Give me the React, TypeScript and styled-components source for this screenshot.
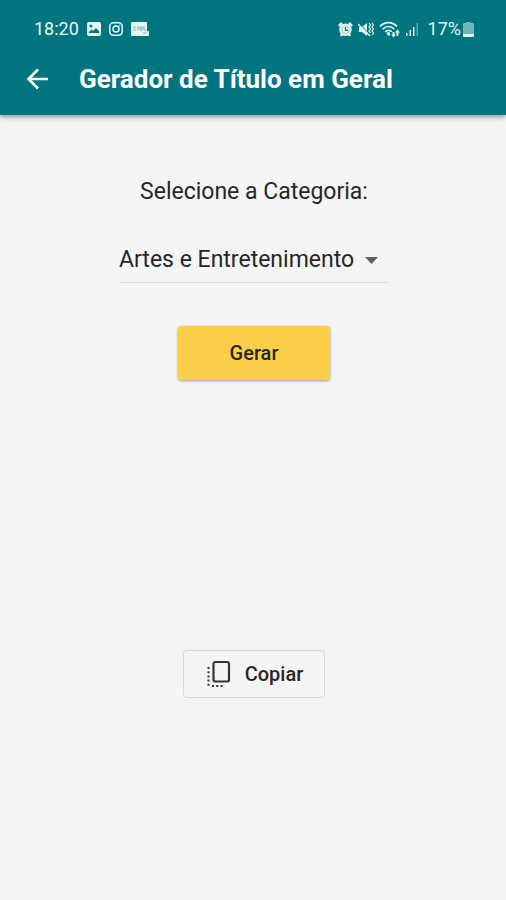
import React, { useState } from "react";
import styled, { createGlobalStyle } from "styled-components";

const GlobalStyle = createGlobalStyle`
  *, *::before, *::after { box-sizing: border-box; }
  body {
    margin: 0;
    background: #f5f5f5;
    color: #262626;
    font-family: Roboto, "Liberation Sans", sans-serif;
  }
`;

const Screen = styled.div`
  min-height: 100vh;
  display: flex;
  flex-direction: column;
`;

const Header = styled.header`
  background: #01757f;
  color: #ffffff;
  box-shadow: 0 2px 5px rgba(0, 0, 0, 0.4);
`;

const StatusBar = styled.div`
  height: 48px;
  padding: 10px 32px 0 34px;
  display: flex;
  align-items: center;
  justify-content: space-between;
  color: #e6f6f7;
  font-size: 18px;
  line-height: 24px;
`;

const StatusGroup = styled.div<{ $gap: number }>`
  display: flex;
  align-items: center;
  gap: ${(p) => p.$gap}px;
`;

const Battery = styled.span`
  display: flex;
  align-items: center;
  gap: 2px;
  margin-left: 4px;
`;

const AppBar = styled.div`
  height: 67px;
  padding: 0 24px 6px;
  display: flex;
  align-items: center;
  gap: 28px;
`;

const BackButton = styled.button`
  display: flex;
  padding: 0;
  border: 0;
  background: none;
  color: inherit;
  cursor: pointer;
`;

const Title = styled.h1`
  margin: 0;
  font-size: 26px;
  line-height: 32px;
  font-weight: 700;
  white-space: nowrap;
`;

const Content = styled.main`
  flex: 1;
  padding: 61px 16px 32px 18px;
  display: flex;
  flex-direction: column;
  align-items: center;
`;

const Label = styled.label`
  font-size: 23px;
  line-height: 32px;
`;

const SelectField = styled.div`
  display: grid;
  align-items: center;
  margin-top: 31px;
  border-bottom: 1px solid #dcdcdc;
  & > * { grid-area: 1 / 1; }
  & > svg {
    justify-self: end;
    margin-right: 11px;
    pointer-events: none;
  }
`;

const Select = styled.select`
  appearance: none;
  height: 43px;
  padding: 0 34px 2px 0;
  border: 0;
  border-radius: 0;
  background: none;
  color: inherit;
  font: 400 23px Roboto, "Liberation Sans", sans-serif;
`;

const Button = styled.button`
  display: flex;
  align-items: center;
  justify-content: center;
  color: inherit;
  border-radius: 4px;
  font: 500 20px Roboto, "Liberation Sans", sans-serif;
  cursor: pointer;
`;

const GenerateButton = styled(Button)`
  width: 152px;
  height: 54px;
  margin-top: 43px;
  border: 0;
  background: #fdce47;
  box-shadow: 0 1px 3px rgba(0, 0, 0, 0.4);
`;

const Result = styled.output`
  display: block;
  min-height: 270px;
`;

const CopyButton = styled(Button)`
  height: 48px;
  padding: 0 21px;
  gap: 14px;
  border: 1px solid #d9d9d9;
  background: none;
`;

const ImageIcon = () => (
  <svg width="14" height="14" viewBox="0 0 14 14" aria-hidden="true">
    <path fillRule="evenodd" fill="currentColor" d="M2 0h10a2 2 0 0 1 2 2v10a2 2 0 0 1-2 2H2a2 2 0 0 1-2-2V2a2 2 0 0 1 2-2Zm0 11h10V9L9 6 6 9 4.500 7.500 2 10ZM4 2.500a1.500 1.500 0 1 0 0 3 1.500 1.500 0 0 0 0-3Z" />
  </svg>
);

const CameraIcon = () => (
  <svg width="14" height="14" viewBox="0 0 14 14" fill="none" stroke="currentColor" strokeWidth="1.500" aria-hidden="true">
    <rect x="0.800" y="0.800" width="12.400" height="12.400" rx="3.500" />
    <circle cx="7" cy="7" r="3" />
    <circle cx="10.700" cy="3.400" r="0.500" fill="currentColor" strokeWidth="0.500" />
  </svg>
);

const BadgeIcon = () => (
  <svg width="18" height="14" viewBox="0 0 18 14" aria-hidden="true">
    <path fill="currentColor" d="M1 0h14a1 1 0 0 1 1 1v8h1a1 1 0 0 1 1 1v3a1 1 0 0 1-1 1H1a1 1 0 0 1-1-1V1a1 1 0 0 1 1-1Z" />
    <path fill="none" stroke="#7db8bd" strokeWidth="1" d="M5 5H3v3h2M7 4v4M9 5v3h2V5H9M14 5h-2v2h2v2M12 11h4" />
  </svg>
);

const AlarmIcon = () => (
  <svg width="15" height="15" viewBox="0 0 15 15" aria-hidden="true">
    <path d="m1 4 3-3M14 4l-3-3M3 14l1-2M12 14l-1-2" stroke="currentColor" strokeWidth="2.600" />
    <circle cx="7.500" cy="7.800" r="6.200" fill="currentColor" />
    <circle cx="7.500" cy="7.800" r="3.800" fill="none" stroke="#01757f" strokeWidth="0.700" opacity="0.500" />
    <path d="M7.500 5v3.300h2.500" fill="none" stroke="#01757f" strokeWidth="1.200" />
  </svg>
);

const MuteIcon = () => (
  <svg width="16" height="15" viewBox="0 0 16 15" aria-hidden="true">
    <path fill="currentColor" d="M1 5h3l5-4v13l-5-4H1Z" />
    <path d="m1 2 10 10" stroke="#01757f" strokeWidth="1.200" />
    <path d="m0 2 12 12" stroke="currentColor" strokeWidth="1.400" />
    <path d="m11 1 1.500 2L11 5l1.500 2L11 9l1.500 2M14 1l1.500 2L14 5l1.500 2L14 9l1.500 2-1.500 2" fill="none" stroke="currentColor" strokeWidth="1.200" />
  </svg>
);

const WifiIcon = () => (
  <svg width="22" height="17" viewBox="0 0 22 17" aria-hidden="true">
    <g fill="none" stroke="currentColor" strokeWidth="1.700">
      <path d="M1 5.500C5.500.3 13.500.3 18 5.500" />
      <path d="M3.600 8.200c3.200-3.600 8.600-3.600 11.800 0" />
      <path d="M6.200 10.800c1.800-2 4.800-2 6.600 0" />
    </g>
    <path fill="currentColor" d="m7.300 12 2.200-1.200 1.500 1v2.500L9.500 15ZM13.500 11h2v2.500H17L14.500 16.500 12 13.500h1.500ZM18.500 8.500 21 11.500h-1.500V15h-2v-3.500H16Z" />
  </svg>
);

const SignalIcon = () => (
  <svg width="13" height="14" viewBox="0 0 13 14" fill="currentColor" aria-hidden="true">
    <path d="M0 11h1.500v3H0ZM3.500 8H5v6H3.500ZM7 5h1.500v9H7Z" />
    <path opacity=".4" d="M10.500 1H12v13h-1.500Z" />
  </svg>
);

const BatteryIcon = () => (
  <svg width="11" height="15" viewBox="0 0 11 15" fill="currentColor" aria-hidden="true">
    <path opacity=".5" d="M3 0h5v1h2a1 1 0 0 1 1 1v10H0V2a1 1 0 0 1 1-1h2Z" />
    <path d="M0 12h11v2a1 1 0 0 1-1 1H1a1 1 0 0 1-1-1Z" />
  </svg>
);

const BackIcon = () => (
  <svg width="27" height="26" viewBox="0 0 27 26" fill="none" stroke="currentColor" strokeWidth="2.600" aria-hidden="true">
    <path d="M24 13H5M14 3.500 4.500 13l9.500 9.500" />
  </svg>
);

const CaretIcon = () => (
  <svg width="13" height="7" viewBox="0 0 13 7" aria-hidden="true">
    <path fill="#616161" d="M0 0h13L6.500 7Z" />
  </svg>
);

const CopyIcon = () => (
  <svg width="26" height="28" viewBox="0 0 26 28" fill="none" stroke="#333333" aria-hidden="true">
    <rect x="8.500" y="2" width="15.500" height="19.500" rx="2" strokeWidth="2.200" />
    <path d="M3.500 7v20" strokeWidth="2" strokeDasharray="2 2.200" />
    <path d="M7 26h13" strokeWidth="2" strokeDasharray="2 2.300" />
  </svg>
);

const categories = ["Artes e Entretenimento"];

export default function App() {
  const [category, setCategory] = useState(categories[0]);

  return (
    <Screen>
      <GlobalStyle />
      <Header>
        <StatusBar>
          <StatusGroup $gap={8}>
            <span>18:20</span>
            <ImageIcon />
            <CameraIcon />
            <BadgeIcon />
          </StatusGroup>
          <StatusGroup $gap={5}>
            <AlarmIcon />
            <MuteIcon />
            <WifiIcon />
            <SignalIcon />
            <Battery>
              17%
              <BatteryIcon />
            </Battery>
          </StatusGroup>
        </StatusBar>
        <AppBar>
          <BackButton type="button" aria-label="Voltar">
            <BackIcon />
          </BackButton>
          <Title>Gerador de Título em Geral</Title>
        </AppBar>
      </Header>
      <Content>
        <Label htmlFor="category">Selecione a Categoria:</Label>
        <SelectField>
          <Select id="category" value={category} onChange={(e) => setCategory(e.target.value)}>
            {categories.map((name) => (
              <option key={name}>{name}</option>
            ))}
          </Select>
          <CaretIcon />
        </SelectField>
        <GenerateButton type="button">Gerar</GenerateButton>
        <Result htmlFor="category" />
        <CopyButton type="button">
          <CopyIcon />
          Copiar
        </CopyButton>
      </Content>
    </Screen>
  );
}
